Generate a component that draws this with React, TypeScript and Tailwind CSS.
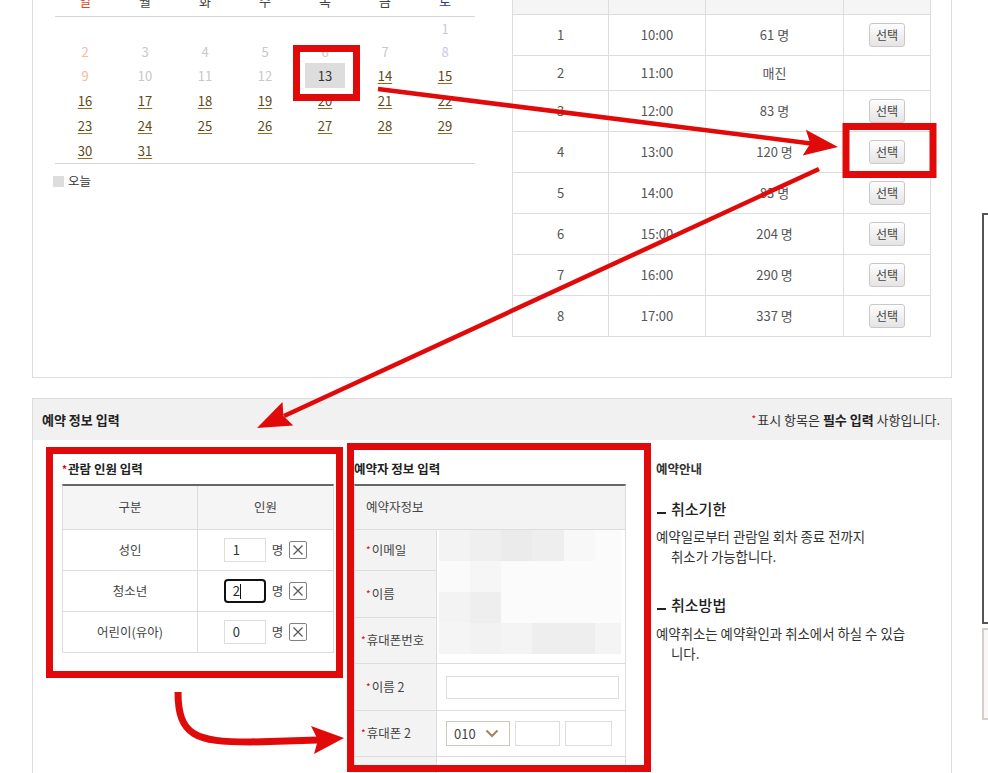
import React from 'react';

const RED = '#e10a0a';

const weekdays = ['일', '월', '화', '수', '목', '금', '토'];

const weeks: (number | null)[][] = [
  [null, null, null, null, null, null, 1],
  [2, 3, 4, 5, 6, 7, 8],
  [9, 10, 11, 12, 13, 14, 15],
  [16, 17, 18, 19, 20, 21, 22],
  [23, 24, 25, 26, 27, 28, 29],
  [30, 31, null, null, null, null, null],
];

const rowHeights = ['h-[23px]', 'h-[23px]', 'h-[25px]', 'h-[25px]', 'h-[25px]', 'h-[25px]'];
const TODAY = 13;

const slots = [
  { no: 1, time: '10:00', left: '61 명', open: true },
  { no: 2, time: '11:00', left: '매진', open: false },
  { no: 3, time: '12:00', left: '83 명', open: true },
  { no: 4, time: '13:00', left: '120 명', open: true },
  { no: 5, time: '14:00', left: '83 명', open: true },
  { no: 6, time: '15:00', left: '204 명', open: true },
  { no: 7, time: '16:00', left: '290 명', open: true },
  { no: 8, time: '17:00', left: '337 명', open: true },
];

const people = [
  { label: '성인', value: '1', focused: false },
  { label: '청소년', value: '2', focused: true },
  { label: '어린이(유아)', value: '0', focused: false },
];

// pixelated blur over the personal data
const mosaic = [
  ['#f3f3f3', '#efefef', '#ebebeb', '#eeeeee', '#f8f8f8', '#fbfbfb'],
  ['#fafafa', '#f6f6f6', '#fbfbfb', '#fbfbfb', '#fbfbfb', '#fbfbfb'],
  ['#f3f3f3', '#eeeeee', '#fbfbfb', '#fbfbfb', '#fbfbfb', '#fbfbfb'],
  ['#f5f5f5', '#f2f2f2', '#f4f4f4', '#eeeeee', '#eeeeee', '#f4f4f4'],
];

function Req() {
  return <span className="text-[#e60012] text-[10px] leading-none mr-[1px] mb-[1px]">*</span>;
}

function DayCell({ day, col }: { day: number | null; col: number }) {
  if (day === null) return <div />;
  if (day === TODAY) {
    return (
      <div className="flex items-center justify-center">
        <span className="w-[40px] h-[25px] bg-[#dddddd] flex items-center justify-center text-[#333]">{day}</span>
      </div>
    );
  }
  if (day < TODAY) {
    const color = col === 0 ? 'text-[#f4b9a4]' : col === 6 ? 'text-[#cac7dc]' : 'text-[#c8c8c8]';
    return <div className={`flex items-center justify-center ${color}`}>{day}</div>;
  }
  return (
    <div className="flex items-center justify-center">
      <a href="#" className="text-[#5e4818] underline decoration-[#8f6d1e] underline-offset-2">
        {day}
      </a>
    </div>
  );
}

function Calendar() {
  return (
    <div className="w-[420px] ml-[22px]">
      <div className="grid grid-cols-7 h-[46px] border-b border-[#d6d6d6] items-end pb-[6px] text-[13px] leading-[18px]">
        {weekdays.map((w, i) => (
          <div
            key={w}
            className={`text-center ${i === 0 ? 'text-[#e2461b]' : i === 6 ? 'text-[#2d3b8c]' : 'text-[#444]'}`}
          >
            {w}
          </div>
        ))}
      </div>
      <div className="border-b border-[#d6d6d6] text-[13px]">
        {weeks.map((week, r) => (
          <div key={r} className={`grid grid-cols-7 ${rowHeights[r]}`}>
            {week.map((d, c) => (
              <DayCell key={c} day={d} col={c} />
            ))}
          </div>
        ))}
      </div>
      <div className="mt-[8px] -ml-[2px] flex items-center gap-[4px] text-[12.5px] text-[#333]">
        <span className="w-[11px] h-[11px] bg-[#dddddd]" />
        <span>오늘</span>
      </div>
    </div>
  );
}

function TimeTable() {
  return (
    <div className="ml-[37px] w-[419px] self-start border-l border-[#dddddd] text-[13px] text-[#555]">
      <div className="flex h-[44px] border-b border-[#dddddd] bg-[#f5f5f5]">
        <div className="w-[96px] border-r border-[#dddddd]" />
        <div className="w-[97px] border-r border-[#dddddd]" />
        <div className="w-[138px] border-r border-[#dddddd]" />
        <div className="w-[87px] border-r border-[#dddddd]" />
      </div>
      {slots.map((s) => (
        <div key={s.no} className={`flex border-b border-[#dddddd] ${s.no === 2 ? 'h-[35px]' : 'h-[41px]'}`}>
          <div className="w-[96px] border-r border-[#dddddd] flex items-center justify-center">{s.no}</div>
          <div className="w-[97px] border-r border-[#dddddd] flex items-center justify-center">{s.time}</div>
          <div className="w-[138px] border-r border-[#dddddd] flex items-center justify-center">{s.left}</div>
          <div className="w-[87px] border-r border-[#dddddd] flex items-center justify-center">
            {s.open && (
              <button className="w-[36px] h-[24px] rounded-[3px] border border-[#c9c9c9] bg-linear-to-b from-[#fdfdfd] to-[#e4e4e4] text-[12px] text-[#444] leading-none">
                선택
              </button>
            )}
          </div>
        </div>
      ))}
    </div>
  );
}

function ClearBox() {
  return (
    <span className="w-[18px] h-[18px] border border-[#808080] rounded-[2px] bg-white flex items-center justify-center">
      <svg width="12" height="12" viewBox="0 0 12 12">
        <path d="M1.5 1.5 L10.5 10.5 M10.5 1.5 L1.5 10.5" stroke="#555" strokeWidth="1.2" />
      </svg>
    </span>
  );
}

function PeopleInput() {
  return (
    <div className="w-[272px]">
      <h3 className="h-[18px] flex items-center text-[12.5px] font-bold text-[#222]">
        <Req />
        관람 인원 입력
      </h3>
      <div className="mt-[6px] border-x border-t-2 border-[#dddddd] border-t-[#666666] text-[12.5px] text-[#444]">
        <div className="flex h-[44px] border-b border-[#dddddd] bg-[#f5f5f5]">
          <div className="w-[135px] border-r border-[#dddddd] flex items-center justify-center">구분</div>
          <div className="flex-1 flex items-center justify-center">인원</div>
        </div>
        {people.map((p) => (
          <div key={p.label} className="flex h-[41px] border-b border-[#dddddd]">
            <div className="w-[135px] border-r border-[#dddddd] flex items-center justify-center">{p.label}</div>
            <div className="flex-1 flex items-center justify-center text-[13px]">
              {p.focused ? (
                <div className="w-[42px] h-[24px] border-2 border-[#111] rounded-[4px] flex items-center pl-[7px] text-[#222]">
                  {p.value}
                  <span className="w-px h-[15px] bg-[#111]" />
                </div>
              ) : (
                <div className="w-[42px] h-[24px] border border-[#dddddd] flex items-center pl-[8px] text-[#333]">
                  {p.value}
                </div>
              )}
              <span className="ml-[6px] text-[12.5px] text-[#444]">명</span>
              <span className="ml-[6px]">
                <ClearBox />
              </span>
            </div>
          </div>
        ))}
      </div>
    </div>
  );
}

function LabelCell({ text, h, pad }: { text: string; h: string; pad: string }) {
  return (
    <div className={`${h} ${pad} border-b border-[#dddddd] bg-[#f3f3f3] flex items-center text-[12.5px] text-[#444]`}>
      <Req />
      {text}
    </div>
  );
}

function BookerInput() {
  return (
    <div className="w-[272px] ml-[20px]">
      <h3 className="h-[18px] flex items-center text-[12.5px] font-bold text-[#222]">예약자 정보 입력</h3>
      <div className="mt-[6px] border-x border-t-2 border-[#dddddd] border-t-[#666666] text-[12.5px] text-[#444]">
        <div className="h-[44px] border-b border-[#dddddd] bg-[#f3f3f3] flex items-center pl-[11px]">예약자정보</div>
        <div className="flex">
          <div className="w-[82px] border-r border-[#dddddd]">
            <LabelCell text="이메일" h="h-[41px]" pad="pl-[11px]" />
            <LabelCell text="이름" h="h-[47px]" pad="pl-[11px]" />
            <LabelCell text="휴대폰번호" h="h-[46px]" pad="pl-[6px]" />
          </div>
          <div className="flex-1 h-[134px] border-b border-[#dddddd] pl-[2px]">
            <div className="grid grid-cols-[31px_31px_31px_32px_31px_26px]">
              {mosaic.flat().map((c, i) => (
                <div key={i} className="h-[31px]" style={{ backgroundColor: c }} />
              ))}
            </div>
          </div>
        </div>
        <div className="flex">
          <div className="w-[82px] border-r border-[#dddddd]">
            <LabelCell text="이름 2" h="h-[47px]" pad="pl-[11px]" />
          </div>
          <div className="flex-1 h-[47px] border-b border-[#dddddd] flex items-center pl-[9px]">
            <div className="w-[173px] h-[23px] border border-[#dddddd]" />
          </div>
        </div>
        <div className="flex">
          <div className="w-[82px] border-r border-[#dddddd]">
            <LabelCell text="휴대폰 2" h="h-[46px]" pad="pl-[6px]" />
          </div>
          <div className="flex-1 h-[46px] border-b border-[#dddddd] flex items-center pl-[9px] gap-[5px]">
            <div className="w-[64px] h-[25px] border border-[#cfc8bd] flex items-center pl-[7px] text-[13px] text-[#444]">
              010
              <svg className="ml-[9px]" width="14" height="9" viewBox="0 0 14 9">
                <path d="M1.5 1.5 L7 7 L12.5 1.5" fill="none" stroke="#a4835a" strokeWidth="2" />
              </svg>
            </div>
            <div className="w-[45px] h-[25px] border border-[#dddddd]" />
            <div className="w-[47px] h-[25px] border border-[#dddddd]" />
          </div>
        </div>
        <div className="flex h-[46px]">
          <div className="w-[82px] border-r border-[#dddddd] bg-[#f3f3f3]" />
          <div className="flex-1" />
        </div>
      </div>
    </div>
  );
}

function GuideHeading({ text }: { text: string }) {
  return (
    <div className="h-[20px] flex items-center text-[15px] font-medium text-[#222]">
      <span className="w-[9px] h-[2px] bg-[#222] mt-[8px] ml-[1px]" />
      <span className="ml-[5px]">{text}</span>
    </div>
  );
}

function Guide() {
  return (
    <div className="ml-[30px] text-[#333]">
      <h3 className="h-[18px] flex items-center text-[12.5px] font-bold text-[#333]">예약안내</h3>
      <div className="mt-[21px]">
        <GuideHeading text="취소기한" />
      </div>
      <div className="mt-[7px] text-[13.4px] leading-[20px] whitespace-nowrap">
        <p>예약일로부터 관람일 회차 종료 전까지</p>
        <p className="pl-[15px]">취소가 가능합니다.</p>
      </div>
      <div className="mt-[29px]">
        <GuideHeading text="취소방법" />
      </div>
      <div className="mt-[8px] text-[13.4px] leading-[20px] whitespace-nowrap">
        <p>예약취소는 예약확인과 취소에서 하실 수 있습</p>
        <p className="pl-[15px]">니다.</p>
      </div>
    </div>
  );
}

function Annotations() {
  return (
    <svg className="absolute left-0 top-0 pointer-events-none" width="988" height="773" viewBox="0 0 988 773">
      <g fill="none" stroke={RED} strokeWidth="7">
        <rect x="296.5" y="48.5" width="60" height="49" />
        <rect x="846" y="126.5" width="87" height="48" />
        <rect x="49.5" y="450.5" width="290" height="224" />
        <rect x="350.5" y="446.5" width="297" height="322" />
      </g>
      <g stroke={RED} strokeWidth="4.5">
        <line x1="378" y1="89" x2="811" y2="143.5" />
        <line x1="819" y1="169" x2="284" y2="416" />
      </g>
      <polygon points="838,147 805.9,129.8 810.3,143.5 802.7,155.6" fill={RED} />
      <polygon points="257,428 282.5,402 283.4,415.9 293.3,425.6" fill={RED} />
      <path d="M178 692 C178 736 196 742 250 742 L318 740" fill="none" stroke={RED} strokeWidth="7" />
      <polygon points="344,738 311,726 318,740 314,754" fill={RED} />
    </svg>
  );
}

export default function App() {
  return (
    <div className="relative w-[988px] h-[773px] overflow-hidden bg-white font-['Noto_Sans_CJK_KR','Noto_Sans',sans-serif] text-[#333]">
      <div className="-mt-[30px] pl-[32px]">
        {/* date + time slot */}
        <section className="flex w-[920px] h-[408px] border border-[#dddddd]">
          <Calendar />
          <TimeTable />
        </section>

        {/* booking info */}
        <section className="mt-[20px] w-[920px] border border-[#dddddd]">
          <div className="h-[41px] bg-[#f1f1f1] flex items-center justify-between pl-[9px] pr-[11px] text-[13px]">
            <h2 className="font-bold text-[#222]">예약 정보 입력</h2>
            <p className="flex items-center text-[#333]">
              <Req />
              표시 항목은&nbsp;<b className="font-bold text-[#222]">필수 입력</b>&nbsp;사항입니다.
            </p>
          </div>
          <div className="flex h-[420px] pl-[29px] pt-[20px]">
            <PeopleInput />
            <BookerInput />
            <Guide />
          </div>
        </section>
      </div>

      {/* floating quick menu on the right edge */}
      <div className="absolute left-[982px] top-[213px] w-[30px] h-[411px] border-2 border-[#555] bg-white" />
      <div className="absolute left-[982px] top-[628px] w-[30px] h-[92px] border-2 border-[#d6cfc8] bg-[#f8f8f8]" />

      <Annotations />
    </div>
  );
}
